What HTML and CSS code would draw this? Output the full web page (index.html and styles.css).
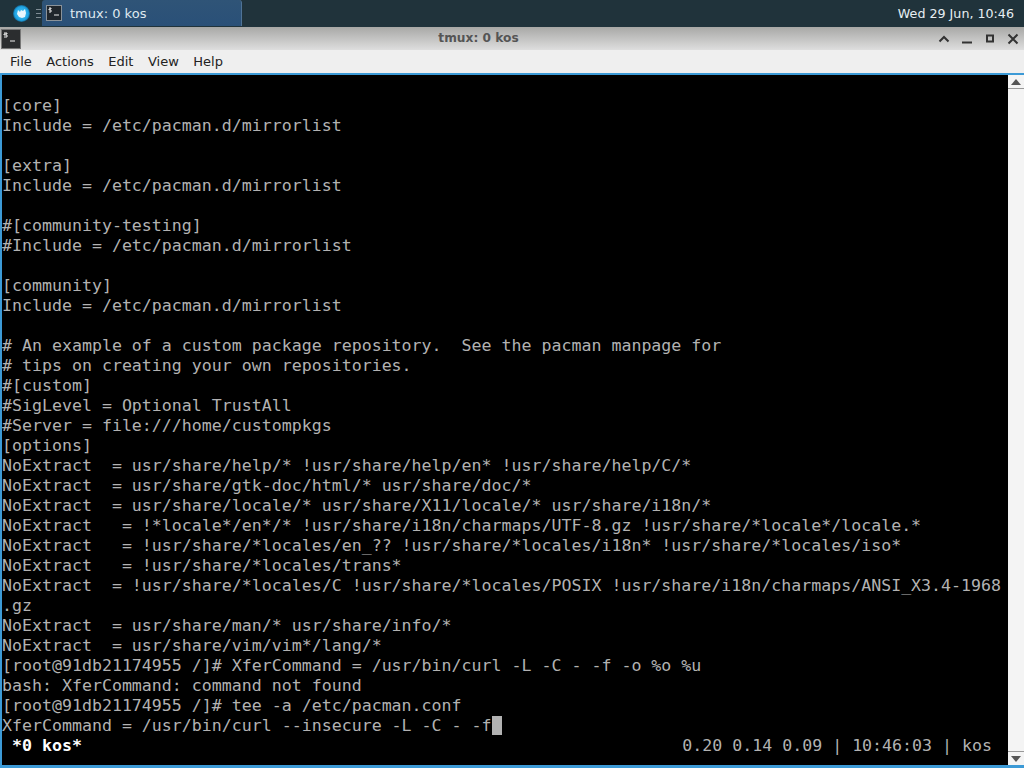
FILE: index.html
```html
<!DOCTYPE html>
<html lang="en">
<head>
<meta charset="utf-8">
<title>tmux: 0 kos</title>
<link rel="stylesheet" href="styles.css">
</head>
<body>
<header class="panel">
  <div class="launcher"><svg width="17" height="17" viewBox="0 0 17 17"><defs><radialGradient id="orb"><stop offset="0" stop-color="#4fc8f5"/><stop offset=".8" stop-color="#1fa4e4"/><stop offset="1" stop-color="#14618a"/></radialGradient></defs><circle cx="8.500" cy="8.500" r="8.500" fill="url(#orb)"/><path d="M4 9l1-4 2 2 1-2 2 1 2-2 1 4-1 4-3 1-3-1z" fill="#eaf7fd"/></svg></div>
  <div class="grip"><i></i><i></i><i></i></div>
  <div class="task">
    <svg class="term-icon" width="16" height="16" viewBox="0 0 16 16"><rect x=".5" y=".5" width="15" height="15" fill="#20262b" stroke="#8a9299"/><path d="M3 3h2v1H3v1h2v2H3M8 10h5" fill="none" stroke="#eee" stroke-width="1"/></svg>
    <span class="task-label">tmux: 0 kos</span>
  </div>
  <div class="clock">Wed 29 Jun, 10:46</div>
</header>
<div class="titlebar">
  <svg class="title-icon" width="20" height="20" viewBox="0 0 20 20"><rect x=".5" y=".5" width="19" height="19" fill="#2b2d2f" stroke="#777"/><path d="M3 4h3v1H3v1h3v2H3M9 12h5" fill="none" stroke="#eee"/></svg>
  <div class="title">tmux: 0 kos</div>
  <div class="winbtns">
    <svg width="12" height="12" viewBox="0 0 12 12"><path d="M1.5 8.5L6 4l4.500 4.500" fill="none" stroke="#333" stroke-width="2"/></svg>
    <svg width="12" height="12" viewBox="0 0 12 12"><path d="M1 9.500h10" fill="none" stroke="#333" stroke-width="2"/></svg>
    <svg width="12" height="12" viewBox="0 0 12 12"><rect x="3" y="2.500" width="6" height="6" fill="none" stroke="#333" stroke-width="2"/></svg>
    <svg width="12" height="12" viewBox="0 0 12 12"><path d="M1.500 1.500l9 9M10.500 1.500l-9 9" fill="none" stroke="#333" stroke-width="2"/></svg>
  </div>
</div>
<nav class="menubar">
  <span>File</span><span>Actions</span><span>Edit</span><span>View</span><span>Help</span>
</nav>
<main class="window">
  <div class="terminal">
<pre class="screen">

[core]
Include = /etc/pacman.d/mirrorlist

[extra]
Include = /etc/pacman.d/mirrorlist

#[community-testing]
#Include = /etc/pacman.d/mirrorlist

[community]
Include = /etc/pacman.d/mirrorlist

# An example of a custom package repository.  See the pacman manpage for
# tips on creating your own repositories.
#[custom]
#SigLevel = Optional TrustAll
#Server = file:///home/custompkgs
[options]
NoExtract  = usr/share/help/* !usr/share/help/en* !usr/share/help/C/*
NoExtract  = usr/share/gtk-doc/html/* usr/share/doc/*
NoExtract  = usr/share/locale/* usr/share/X11/locale/* usr/share/i18n/*
NoExtract   = !*locale*/en*/* !usr/share/i18n/charmaps/UTF-8.gz !usr/share/*locale*/locale.*
NoExtract   = !usr/share/*locales/en_?? !usr/share/*locales/i18n* !usr/share/*locales/iso*
NoExtract   = !usr/share/*locales/trans*
NoExtract  = !usr/share/*locales/C !usr/share/*locales/POSIX !usr/share/i18n/charmaps/ANSI_X3.4-1968
.gz
NoExtract  = usr/share/man/* usr/share/info/*
NoExtract  = usr/share/vim/vim*/lang/*
[root@91db21174955 /]# XferCommand = /usr/bin/curl -L -C - -f -o %o %u
bash: XferCommand: command not found
[root@91db21174955 /]# tee -a /etc/pacman.conf
XferCommand = /usr/bin/curl --insecure -L -C - -f<span class="cursor"> </span></pre>
    <div class="status"><b class="win"> *0 kos*</b><span>0.20 0.14 0.09 | 10:46:03 | kos</span></div>
  </div>
  <div class="scrollbar">
    <div class="arrow"><svg width="10" height="6" viewBox="0 0 10 6"><path d="M5 0l5 6H0z" fill="#555"/></svg></div>
    <div class="track"></div>
    <div class="arrow down"><svg width="10" height="6" viewBox="0 0 10 6"><path d="M5 6l5-6H0z" fill="#555"/></svg></div>
  </div>
</main>
</body>
</html>
```
FILE: styles.css
```css
html, body { margin: 0; padding: 0; }
body {
  width: 1024px;
  height: 768px;
  overflow: hidden;
  display: flex;
  flex-direction: column;
  font-family: "DejaVu Sans", sans-serif;
  background: #eee;
}
.panel {
  height: 27px;
  flex: none;
  display: flex;
  align-items: center;
  background: #20333b;
  color: #e6eef2;
  font-size: 13px;
}
.launcher { margin-left: 13px; width: 17px; height: 17px; display: flex; }
.grip { margin-left: 6px; width: 5px; display: flex; flex-direction: column; gap: 3px; }
.grip i { display: block; height: 1px; background: #7f8d95; }
.task {
  margin-left: 1px;
  margin-right: auto;
  width: 200px;
  height: 26px;
  align-self: flex-start;
  box-sizing: border-box;
  display: flex;
  align-items: center;
  background: linear-gradient(#2f5477, #2a5078);
  border-right: 1px solid #4f7396;
  border-radius: 3px 3px 0 0;
}
.term-icon { margin-left: 4px; }
.task-label { margin-left: 8px; color: #dfe9f0; }
.clock { margin-right: 10px; font-size: 12.680px; }
.titlebar {
  height: 23px;
  flex: none;
  display: flex;
  align-items: center;
  background: linear-gradient(#a8a8a6, #dedede);
}
.title-icon { margin-left: 1px; flex: none; }
.title { flex: 1; text-align: center; font-size: 12.200px; font-weight: 700; color: #555; margin-left: -2px; padding-bottom: 2px; }
.winbtns { display: flex; gap: 11px; padding-right: 5px; align-items: center; }
.menubar {
  height: 23px;
  flex: none;
  display: flex;
  align-items: center;
  gap: 14.500px;
  padding-left: 10px;
  background: #efefef;
  color: #222;
  font-size: 13px;
}
.window {
  flex: 1;
  min-height: 0;
  display: flex;
  border: 2px solid #3c9ad6;
  border-bottom-width: 3px;
  border-right: 0;
  background: #000;
}
.terminal {
  flex: 1;
  min-width: 0;
  display: flex;
  flex-direction: column;
  padding-top: 1px;
  background: #000;
  color: #b2b2b2;
  font-family: "DejaVu Sans Mono", monospace;
  font-size: 16.600px;
  line-height: 20px;
}
.screen { margin: 0; font: inherit; flex: none; }
.cursor { background: #b2b2b2; }
.status { display: flex; justify-content: space-between; white-space: pre; padding-right: 16px; }
.win { color: #fff; font-weight: 700; }
.scrollbar { width: 16px; flex: none; display: flex; flex-direction: column; background: #f4f4f4; }
.arrow { height: 13px; display: flex; align-items: center; justify-content: center; background: #f4f4f4; border-bottom: 1px solid #999; }
.arrow.down { border-bottom: 0; border-top: 1px solid #999; }
.track { flex: 1; }
```
